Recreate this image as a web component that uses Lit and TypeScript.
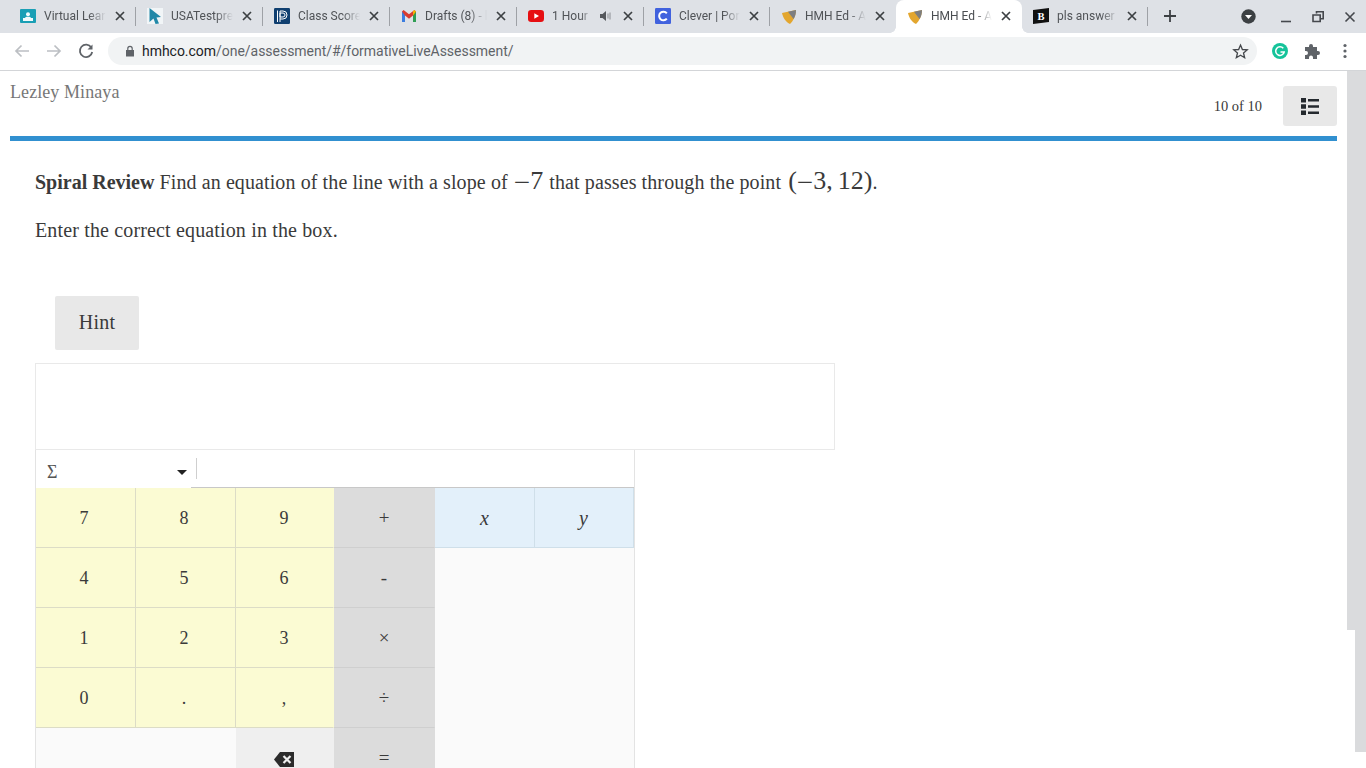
import { LitElement, html, css, svg } from "lit";
import { customElement } from "lit/decorators.js";

const favicons: Record<string, unknown> = {
  virtual: svg`<rect x="0" y="1" width="16" height="14" rx="1" fill="#1a9fb5"/><rect x="3" y="10" width="10" height="3" fill="#f2fbfc"/><path d="M4.500 10.500c.5-1.500 2-1.800 3.500-1.800s3 .3 3.500 1.800z" fill="#f2fbfc"/><circle cx="8" cy="6.300" r="2" fill="#f2fbfc"/>`,
  usa: svg`<rect x="0" y="0" width="16" height="16" fill="#f1f5f7"/><path d="M2.500 0 14 9 9.500 9.600 12 15.500 8.500 16 6.500 10.600 2.500 14z" fill="#2188a8"/>`,
  ps: svg`<rect x="0" y="0" width="16" height="16" rx="1.200" fill="#0f3f70"/><path d="M3.500 2.500v11.500M6 14V3h3a4 4 0 0 1 0 8H6M6 5h3a2 2 0 0 1 0 4H6z" stroke="#fff" stroke-width="1" fill="none"/>`,
  gmail: svg`<path d="M1 3.500V14h3V7.500L8 10.700l4-3.200V14h3V3.500L13.400 2 8 6.200 2.600 2z" fill="#d93b30"/><path d="M1 3.500V14h3V7.500z" fill="#3b7de0"/><path d="M12 7.500V14h3V3.500z" fill="#2f9e54"/><path d="M13.400 2 15 3.500 12 7.500V3.300z" fill="#f4b400"/>`,
  yt: svg`<rect x="0" y="2" width="16" height="12" rx="3.200" fill="#e60f12"/><path d="M6.300 5.200v5.600L11 8z" fill="#fff"/>`,
  clever: svg`<rect x="0" y="0" width="16" height="16" rx="1.200" fill="#4162de"/><path d="M11.800 5.300A4.300 4.300 0 1 0 11.800 10.700" stroke="#fff" stroke-width="2" fill="none"/>`,
  hmh: svg`<path d="M1 5 15 2C15 8 12 13 9 16 5 14 2 10 1 5z" fill="#e3a62e"/><path d="M7 3.700 15 2C15 6 14 9 12.500 11z" fill="#7d7e80"/>`,
  brainly: svg`<path d="M0 2 16 0v14L0 16z" fill="#111"/><text x="8" y="12" text-anchor="middle" font-family="Liberation Serif" font-weight="700" font-size="10.500" fill="#fff">B</text>`,
};

type Tab = { icon: string; title: string; active?: boolean; audio?: boolean };
const tabs: Tab[] = [
  { icon: "virtual", title: "Virtual Learning" },
  { icon: "usa", title: "USATestprep" },
  { icon: "ps", title: "Class Scores" },
  { icon: "gmail", title: "Drafts (8) - lezley" },
  { icon: "yt", title: "1 Hour", audio: true },
  { icon: "clever", title: "Clever | Portal" },
  { icon: "hmh", title: "HMH Ed - Assessment" },
  { icon: "hmh", title: "HMH Ed - Assessment", active: true },
  { icon: "brainly", title: "pls answer" },
];

const keys = [
  ["7", "n"], ["8", "n"], ["9", "n"], ["+", "o"], ["x", "v"], ["y", "v"],
  ["4", "n"], ["5", "n"], ["6", "n"], ["-", "o"], ["", "e"], ["", "e"],
  ["1", "n"], ["2", "n"], ["3", "n"], ["×", "o"], ["", "e"], ["", "e"],
  ["0", "n"], [".", "n"], [",", "n"], ["÷", "o"], ["", "e"], ["", "e"],
  ["", "e"], ["", "e"], ["⌫", "b"], ["=", "o"], ["", "e"], ["", "e"],
];

@customElement("app-root")
export class AppRoot extends LitElement {
  static styles = css`
    :host { display: block; width: 1366px; height: 768px; overflow: hidden; background: #fff; font-family: "Liberation Serif", serif; }
    .tabstrip { height: 33px; background: #dee1e6; display: flex; padding-left: 9px; font-family: Roboto, "Liberation Sans", sans-serif; box-sizing: border-box; }
    .tab { width: 126px; height: 33px; display: flex; align-items: center; padding: 0 10px 2px 11px; box-sizing: border-box; font-size: 12px; color: #505357; position: relative; flex: none; }
    .tab:nth-child(-n+5) { width: 127px; }
    .tab.sep::after { content: ""; position: absolute; right: 0; top: 7px; height: 19px; width: 1px; background: #9ea1a6; }
    .tab.active { background: #fff; border-radius: 8px 8px 0 0; color: #4b4e52; }
    .tab.active::before, .tab.active::after { content: ""; position: absolute; bottom: 0; width: 6px; height: 6px; }
    .tab.active::before { left: -6px; background: radial-gradient(circle at 0 0, #dee1e6 5.500px, #fff 6px); }
    .tab.active::after { right: -6px; background: radial-gradient(circle at 100% 0, #dee1e6 5.500px, #fff 6px); }
    .fav { width: 16px; height: 16px; flex: none; margin-right: 8px; }
    .title { flex: 1; min-width: 0; white-space: nowrap; overflow: hidden; margin-right: 6px; -webkit-mask-image: linear-gradient(90deg, #000 70%, transparent 97%); mask-image: linear-gradient(90deg, #000 70%, transparent 97%); }
    .close { width: 12px; height: 12px; flex: none; }
    .audio { width: 14px; height: 14px; flex: none; margin-right: 9px; }
    .newtab { width: 16px; height: 16px; margin: 8px 0 0 14px; flex: none; }
    .stripright { flex: 1; display: flex; justify-content: flex-end; align-items: center; padding-right: 9px; }
    .profile { width: 15px; height: 15px; margin-right: 5px; }
    .winbtn { width: 14px; height: 14px; margin-left: 18px; }
    .toolbar { height: 38px; box-sizing: border-box; border-bottom: 1px solid #d3d5d8; background: #fff; display: flex; align-items: flex-start; padding: 4px 10px 0 13px; }
    .nav { width: 18px; height: 18px; margin: 5px 14px 0 0; flex: none; }
    .nav.reload { margin-right: 13px; }
    .omni { width: 1149px; height: 28px; border-radius: 14px; background: #f1f3f4; display: flex; align-items: center; padding: 0 8px 0 16px; box-sizing: border-box; font: 14px Roboto, "Liberation Sans", sans-serif; color: #5f6368; flex: none; }
    .omni b { font-weight: 400; color: #202124; }
    .lock { width: 12px; height: 12px; margin-right: 6px; flex: none; }
    .url { flex: 1; white-space: nowrap; letter-spacing: -0.03px; }
    .star { width: 17px; height: 17px; }
    .ext { width: 18px; height: 18px; flex: none; margin-top: 5px; }
    .ext.g { margin-left: 14px; }
    .ext.p { margin-left: 14px; }
    .ext.m { margin-left: 16px; width: 16px; }
    .page { display: flex; height: 697px; }
    .main { width: 1347px; flex: none; padding-left: 10px; padding-right: 10px; box-sizing: border-box; overflow: hidden; }
    .head { height: 65px; display: flex; align-items: flex-start; border-bottom: 5px solid #3190d0; }
    .name { font-size: 18px; letter-spacing: 0.08px; color: #777; line-height: 22px; margin-top: 10px; flex: 1; }
    .count { font-size: 14.500px; color: #3a3a3a; margin-top: 26px; margin-right: 21px; line-height: 18px; }
    .listbtn { width: 54px; height: 40px; border-radius: 3px; background: #e8e8e8; margin-top: 15px; display: flex; align-items: center; justify-content: center; }
    .listbtn svg { width: 18px; height: 17px; }
    .body { padding-left: 25px; color: #3a3a3a; font-size: 20px; line-height: 28px; }
    .q1 { margin: 26px 0 0; height: 28px; white-space: nowrap; letter-spacing: 0.1px; }
    .q1 b { letter-spacing: 0; }
    .math { font-size: 26px; letter-spacing: 0; line-height: 28px; margin: 0 1px; }
    .math.pt { margin: 0 0 0 2px; }
    .minus { font-size: 29px; line-height: 20px; vertical-align: -3px; }
    .comma { letter-spacing: -1.500px; }
    .q2 { margin: 21px 0 0; letter-spacing: 0.15px; }
    .hint { display: flex; align-items: center; justify-content: center; width: 84px; height: 54px; margin: 52px 0 13px 20px; padding-bottom: 2px; box-sizing: border-box; background: #e8e8e8; border-radius: 2px; color: #3a3a3a; letter-spacing: 0.2px; }
    .answer { width: 800px; height: 87px; box-sizing: border-box; border: 1px solid #e9e9e9; }
    .calc { width: 600px; box-sizing: border-box; border-left: 1px solid #e3e3e3; border-right: 1px solid #e3e3e3; }
    .calcbar { height: 38px; display: flex; }
    .sigma { width: 155px; height: 38px; display: flex; align-items: center; box-sizing: border-box; padding: 5px 4px 0 11px; font-size: 18px; color: #555; justify-content: space-between; }
    .caret { width: 0; height: 0; border-left: 5.500px solid transparent; border-right: 5.500px solid transparent; border-top: 5.500px solid #222; margin-top: 2px; }
    .barrest { flex: 1; border-bottom: 1px solid #c8c8c8; padding-top: 8px; padding-left: 5px; box-sizing: border-box; }
    .barrest i { display: block; width: 1px; height: 21px; background: #cfcfcf; }
    .grid { display: grid; grid-template-columns: 100px 100px 98px 101px 100px 99px; grid-auto-rows: 60px; }
    .key { display: flex; align-items: center; justify-content: center; box-sizing: border-box; font-size: 18px; color: #3a3a3a; border-right: 1px solid #d6d6d6; border-bottom: 1px solid #d6d6d6; padding-right: 1px; }
    .key:nth-child(6n+1), .key:nth-child(6n+2) { padding-right: 3px; }
    .key:nth-child(6n+4), .key:nth-child(6n+5) { padding-right: 0; }
    .n { background: #fbfbd3; border-color: #dcdcc6; }
    .n:nth-child(6n+3) { border-right-color: #fbfbd3; }
    .o { background: #dcdcdc; border-color: #cfcfcf; border-right-color: #dcdcdc; font-size: 19px; }
    .v { background: #e3f0fa; border-color: #cfdfe9; font-style: italic; font-size: 20px; }
    .e { background: #fafafa; border-color: transparent; }
    .b { background: #efefef; border-color: #efefef; padding-top: 4px; }
    .b svg { width: 20px; height: 15px; }
    .scroll { flex: 1; display: flex; flex-direction: column; align-items: flex-end; }
    .s1 { width: 100%; height: 559px; background: #dadbdd; }
    .s2 { width: 11px; height: 122px; background: #dadbdd; }
  `;

  private x() {
    return html`<svg class="close" viewBox="0 0 12 12"><path d="M2 2l8 8M10 2l-8 8" stroke="#3c4043" stroke-width="1.700" /></svg>`;
  }

  render() {
    return html`
      <div class="tabstrip">
        ${tabs.map((t, i) => html`
          <div class="tab ${t.active ? "active" : ""} ${!t.active && !tabs[i + 1]?.active ? "sep" : ""}">
            <svg class="fav" viewBox="0 0 16 16">${favicons[t.icon]}</svg>
            <span class="title">${t.title}</span>
            ${t.audio ? html`<svg class="audio" viewBox="0 0 14 14"><path d="M1 5h2.500L7 2v10L3.500 9H1z" fill="#55585c"/><path d="M9 4.500v5M11 3.500v7" stroke="#8a8d91" stroke-width="1"/></svg>` : ""}
            ${this.x()}
          </div>`)}
        <svg class="newtab" viewBox="0 0 16 16"><path d="M8 2v12M2 8h12" stroke="#3c4043" stroke-width="1.800"/></svg>
        <div class="stripright">
          <svg class="profile" viewBox="0 0 15 15"><circle cx="7.500" cy="7.500" r="7.200" fill="#3c4043"/><path d="M4 6h7L7.500 10z" fill="#fff"/></svg>
          <svg class="winbtn" viewBox="0 0 14 14"><path d="M2 11.500h10" stroke="#45484d" stroke-width="1.600"/></svg>
          <svg class="winbtn" viewBox="0 0 14 14"><path d="M5.500 3.500V1.800h6.700v7H9.500M2 5h7.200v6.500H2z" stroke="#45484d" stroke-width="1.600" fill="none"/></svg>
          <svg class="winbtn" viewBox="0 0 14 14"><path d="M2.500 2.500l9 9M11.500 2.500l-9 9" stroke="#45484d" stroke-width="1.600"/></svg>
        </div>
      </div>
      <div class="toolbar">
        <svg class="nav" viewBox="0 0 18 18"><path d="M16 9H3M8.500 3.500 3 9l5.500 5.500" stroke="#bcbfc3" stroke-width="1.700" fill="none"/></svg>
        <svg class="nav" viewBox="0 0 18 18"><path d="M2 9h13M9.500 3.500 15 9l-5.500 5.500" stroke="#bcbfc3" stroke-width="1.700" fill="none"/></svg>
        <svg class="nav reload" viewBox="0 0 18 18"><path d="M14.300 5.500A6.200 6.200 0 1 0 15.200 10" stroke="#5f6368" stroke-width="1.800" fill="none"/><path d="M15.500 2.500v5h-5z" fill="#5f6368"/></svg>
        <div class="omni">
          <svg class="lock" viewBox="0 0 12 12"><path d="M2 5h8v6.500H2z" fill="#5f6368"/><path d="M3.800 5V3.500a2.200 2.200 0 0 1 4.400 0V5" stroke="#5f6368" stroke-width="1.200" fill="none"/></svg>
          <span class="url"><b>hmhco.com</b>/one/assessment/#/formativeLiveAssessment/</span>
          <svg class="star" viewBox="0 0 18 18"><path d="M9 2.200 11 6.900l5.100.4-3.900 3.300 1.200 5L9 13 4.600 15.600l1.200-5-3.900-3.300L7 6.900z" stroke="#44474b" stroke-width="1.400" fill="none"/></svg>
        </div>
        <svg class="ext g" viewBox="0 0 18 18"><circle cx="9" cy="9" r="8" fill="#15c39a"/><path d="M12.300 6.300A4.300 4.300 0 1 0 13.200 10H9.500" stroke="#fff" stroke-width="1.500" fill="none"/></svg>
        <svg class="ext p" viewBox="0 0 18 18"><path d="M2 5h4V4a2 2 0 0 1 4 0v1h4v4h1a2 2 0 0 1 0 4h-1v4h-4v-1.500a2 2 0 0 0-4 0V17H2v-4h1a2 2 0 0 0 0-4H2z" fill="#5f6368"/></svg>
        <svg class="ext m" viewBox="0 0 16 18"><circle cx="8" cy="3.500" r="1.600" fill="#5f6368"/><circle cx="8" cy="9" r="1.600" fill="#5f6368"/><circle cx="8" cy="14.500" r="1.600" fill="#5f6368"/></svg>
      </div>
      <div class="page">
        <div class="main">
          <div class="head">
            <div class="name">Lezley Minaya</div>
            <div class="count">10 of 10</div>
            <div class="listbtn"><svg viewBox="0 0 18 17"><path d="M0 0h5v4.500H0zM0 6.250h5v4.500H0zM0 12.500h5v4.500H0zM7 1h11v2.500H7zM7 7.250h11v2.500H7zM7 13.500h11v2.500H7z" fill="#24292e"/></svg></div>
          </div>
          <div class="body">
            <div class="q1"><b>Spiral Review</b> Find an equation of the line with a slope of <span class="math"><span class="minus">−</span>7</span> that passes through the point <span class="math pt">(<span class="minus">−</span>3<span class="comma">,</span> 12)</span>.</div>
            <div class="q2">Enter the correct equation in the box.</div>
            <div class="hint">Hint</div>
            <div class="answer"></div>
            <div class="calc">
              <div class="calcbar">
                <div class="sigma"><span>Σ</span><span class="caret"></span></div>
                <div class="barrest"><i></i></div>
              </div>
              <div class="grid">
                ${keys.map(([k, c]) => html`<div class="key ${c}">${c === "b"
                  ? html`<svg viewBox="0 0 20 15"><path d="M6 0h14v15H6L0 7.500z" fill="#2b2b2b"/><path d="M9.500 4l7 7M16.500 4l-7 7" stroke="#efefef" stroke-width="2.200"/></svg>`
                  : k}</div>`)}
              </div>
            </div>
          </div>
        </div>
        <div class="scroll"><div class="s1"></div><div class="s2"></div></div>
      </div>
    `;
  }
}
